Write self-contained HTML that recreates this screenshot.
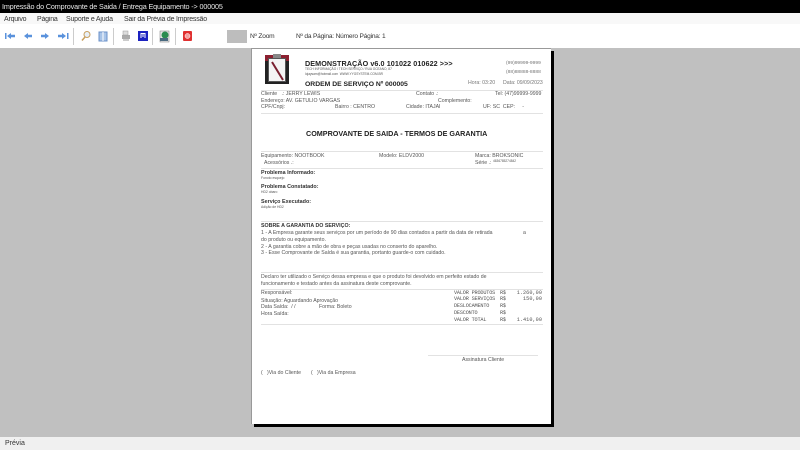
<!DOCTYPE html>
<html lang="pt"><head><meta charset="utf-8"><title>Prévia</title>
<style>
html,body{margin:0;padding:0}
body{width:800px;height:450px;overflow:hidden;position:relative;background:#c0c0c0;font-family:"Liberation Sans",sans-serif}
div{position:absolute;white-space:pre;box-sizing:border-box}
.t{color:#555;font-size:5.2px;line-height:7px;filter:blur(.25px)}
.b{color:#222;font-weight:bold}
.m{font-family:"Liberation Mono",monospace;font-size:5.200px;letter-spacing:-.18px;color:#555;line-height:7px;filter:blur(.25px)}
.l{height:1px;background:#e2e2e2}
.u{font-size:7px;letter-spacing:-.2px;color:#333;line-height:12px;filter:blur(.2px)}
.s{width:1px;height:17px;top:28px;background:#ccc}
svg{position:absolute}
</style></head><body>
<div style="left:0;top:0;width:800px;height:13px;background:#000;color:#e8e8e8;font-size:7.200px;letter-spacing:-.13px;line-height:14px;padding-left:2px">Impressão do Comprovante de Saida / Entrega Equipamento -&gt; 000005</div>
<div style="left:0;top:13px;width:800px;height:11px;background:#f8f8f8"></div>
<div class="u" style="left:4px;top:14px">Arquivo</div>
<div class="u" style="left:37px;top:14px">Página</div>
<div class="u" style="left:66px;top:14px">Suporte e Ajuda</div>
<div class="u" style="left:124px;top:14px">Sair da Prévia de Impressão</div>
<div style="left:0;top:24px;width:800px;height:24px;background:#fff"></div>
<svg style="left:0;top:27px" width="200" height="19" viewBox="0 0 200 19">
<g fill="#5a92dc">
<path d="M7 9l4-3v1.800h4v2.400h-4v1.800z"/><rect x="5" y="6" width="1.500" height="6"/>
<path d="M24 9l4-3v1.800h4v2.400h-4v1.800z"/>
<path d="M49 9l-4-3v1.800h-4v2.400h4v1.800z"/>
<path d="M66 9l-4-3v1.800h-4v2.400h4v1.800z"/><rect x="67" y="6" width="1.500" height="6"/>
</g>
<circle cx="87" cy="7.500" r="3" fill="#e8f0f8" stroke="#c8a060"/><path d="M85 10l-3 3.500" stroke="#c8a060" stroke-width="1.500"/>
<rect x="99" y="5" width="8" height="9" fill="#a8c4e8" stroke="#6a90c8"/><path d="M103 5v9" stroke="#fff"/>
<rect x="122" y="8" width="8" height="4" fill="#aaa"/><rect x="123" y="4" width="5" height="4" fill="#ddd" stroke="#999" stroke-width=".5"/><rect x="123" y="12" width="6" height="2" fill="#ccc"/>
<rect x="138" y="4" width="10" height="10" fill="#1c22c0"/><path d="M140.500 6h5v5h-1v-4h-1v3h-1v-3h-1v4h-1z" fill="#fff"/>
<rect x="160" y="4" width="9" height="11" fill="#e8e8e8" stroke="#777" stroke-width=".5"/><circle cx="165" cy="8" r="3.500" fill="#2a8c50"/><path d="M160 11h8v3h-8z" fill="#4a6a80"/>
<rect x="183" y="4" width="9" height="10" rx="1" fill="#e03030"/><circle cx="187.500" cy="9" r="2.500" fill="#f5a0a0" stroke="#fff" stroke-width=".5"/>
</svg>
<div class="s" style="left:73px"></div><div class="s" style="left:113px"></div><div class="s" style="left:152px"></div><div class="s" style="left:175px"></div>
<div style="left:227px;top:30px;width:20px;height:13px;background:#bdbdbd"></div>
<div class="u" style="left:250px;top:31px;font-size:6.600px">Nº Zoom</div>
<div class="u" style="left:296px;top:31px;font-size:6.600px">Nº da Página: Número Página: 1</div>

<div style="left:254px;top:51px;width:300px;height:376px;background:#000"></div>
<div style="left:251px;top:48px;width:300px;height:376px;background:#fff;border:1px solid #999;border-width:1px 0 0 1px"></div>

<div style="left:265px;top:55px;width:24px;height:29px;background:#222"></div>
<div style="left:265px;top:55px;width:24px;height:6px;background:#8c2030"></div>
<div style="left:268px;top:58px;width:18px;height:24px;background:#f4f4f4;border:1px solid #555"></div>
<div style="left:273px;top:54px;width:8px;height:4px;background:#888"></div>
<svg style="left:265px;top:55px" width="24" height="30"><path d="M7 7l11 18" stroke="#7a2030" stroke-width="2"/></svg>

<div class="b" style="left:305px;top:59px;font-size:7.200px;line-height:9px;letter-spacing:.08px">DEMONSTRAÇÃO v6.0 101022 010622 &gt;&gt;&gt;</div>
<div class="t" style="left:305px;top:67px;font-size:3.200px;line-height:4px">TECH INFORMAÇÃO / TECH SERVIÇO / RUA OCEANO, 87</div>
<div class="t" style="left:305px;top:72px;font-size:3.200px;line-height:4px">lojaysam@hotmail.com  WWW.YYGSYSTEM.COM.BR</div>
<div class="t" style="left:506px;top:60px;font-size:4.900px;color:#777">(99)99999-9999</div>
<div class="t" style="left:506px;top:69px;font-size:4.900px;color:#777">(88)88888-8888</div>
<div class="b" style="left:305px;top:80px;font-size:6.800px;line-height:9px">ORDEM DE SERVIÇO Nº 000005</div>
<div class="t" style="left:468px;top:80px;color:#777">Hora: 03:20</div>
<div class="t" style="left:503px;top:80px;color:#777">Data: 09/09/2023</div>
<div class="l" style="left:261px;top:90px;width:282px"></div>
<div class="t" style="left:261px;top:91px">Cliente   .: JERRY LEWIS</div>
<div class="t" style="left:416px;top:91px">Contato .:</div>
<div class="t" style="left:495px;top:91px">Tel: (47)99999-9999</div>
<div class="t" style="left:261px;top:98px">Endereço: AV. GETULIO VARGAS</div>
<div class="t" style="left:438px;top:98px">Complemento:</div>
<div class="t" style="left:261px;top:104px">CPF/Cnpj:</div>
<div class="t" style="left:335px;top:104px">Bairro : CENTRO</div>
<div class="t" style="left:406px;top:104px">Cidade: ITAJAI</div>
<div class="t" style="left:483px;top:104px">UF: SC  CEP:     -</div>
<div class="l" style="left:261px;top:113px;width:282px"></div>
<div class="b" style="left:306px;top:129px;font-size:7.200px;line-height:9px">COMPROVANTE DE SAIDA - TERMOS DE GARANTIA</div>

<div class="l" style="left:261px;top:151px;width:282px"></div>
<div class="t" style="left:261px;top:153px">Equipamento: NOOTBOOK</div>
<div class="t" style="left:379px;top:153px">Modelo: ELDV2000</div>
<div class="t" style="left:475px;top:153px">Marca: BROKSONIC</div>
<div class="t" style="left:264px;top:160px">Acessórios .:</div>
<div class="t" style="left:475px;top:160px">Série .:</div>
<div class="t" style="left:493px;top:158px;font-size:3.200px">4636785274842</div>
<div class="l" style="left:261px;top:168px;width:282px"></div>
<div class="t b" style="left:261px;top:170px;font-size:5.400px;color:#333">Problema Informado:</div>
<div class="t" style="left:261px;top:175px;font-size:3.400px">Fonoto esquejo</div>
<div class="t b" style="left:261px;top:184px;font-size:5.400px;color:#333">Problema Constatado:</div>
<div class="t" style="left:261px;top:189px;font-size:3.400px">HD2 obaro</div>
<div class="t b" style="left:261px;top:199px;font-size:5.400px;color:#333">Serviço Executado:</div>
<div class="t" style="left:261px;top:204px;font-size:3.400px">Adição de HD2</div>
<div class="l" style="left:261px;top:221px;width:282px"></div>
<div class="t b" style="left:261px;top:223px;font-size:5.300px;color:#333">SOBRE A GARANTIA DO SERVIÇO:</div>
<div class="t" style="left:261px;top:230px">1 - A Empresa garante seus serviços por um período de 90 dias contados a partir da data de retirada</div>
<div class="t" style="left:523px;top:230px">a</div>
<div class="t" style="left:261px;top:237px">do produto ou equipamento.</div>
<div class="t" style="left:261px;top:244px">2 - A garantia cobre a mão de obra e peças usadas no conserto do aparelho.</div>
<div class="t" style="left:261px;top:250px">3 - Esse Comprovante de Saída é sua garantia, portanto guarde-o com cuidado.</div>
<div class="l" style="left:261px;top:272px;width:282px"></div>
<div class="t" style="left:261px;top:274px">Declaro ter utilizado o Serviço dessa empresa e que o produto foi devolvido em perfeito estado de</div>
<div class="t" style="left:261px;top:281px">funcionamento e testado antes da assinatura deste comprovante.</div>
<div class="l" style="left:261px;top:289px;width:282px"></div>
<div class="t" style="left:261px;top:290px">Responsável:</div>
<div class="t" style="left:261px;top:298px">Situação: Aguardando Aprovação</div>
<div class="t" style="left:261px;top:304px">Data Saída:  / /</div>
<div class="t" style="left:319px;top:304px">Forma: Boleto</div>
<div class="t" style="left:261px;top:311px">Hora Saída:</div>
<div class="m" style="left:454px;top:290px">VALOR PRODUTOS</div><div class="m" style="left:500px;top:290px">R$</div><div class="m" style="right:258px;top:290px;letter-spacing:.05px">1.260,00</div>
<div class="m" style="left:454px;top:296px">VALOR SERVIÇOS</div><div class="m" style="left:500px;top:296px">R$</div><div class="m" style="right:258px;top:296px;letter-spacing:.05px">150,00</div>
<div class="m" style="left:454px;top:303px">DESLOCAMENTO</div><div class="m" style="left:500px;top:303px">R$</div>
<div class="m" style="left:454px;top:310px">DESCONTO</div><div class="m" style="left:500px;top:310px">R$</div>
<div class="m" style="left:454px;top:317px">VALOR TOTAL</div><div class="m" style="left:500px;top:317px">R$</div><div class="m" style="right:258px;top:317px;letter-spacing:.05px">1.410,00</div>
<div class="l" style="left:261px;top:324px;width:282px"></div>
<div class="l" style="left:428px;top:355px;width:110px"></div>
<div class="t" style="left:462px;top:357px">Assinatura Cliente</div>
<div class="t" style="left:261px;top:370px">(   )Via do Cliente</div>
<div class="t" style="left:311px;top:370px">(   )Via da Empresa</div>

<div style="left:0;top:437px;width:800px;height:13px;background:#f0f0f0;color:#333;font-size:7px;line-height:13px;padding-left:5px">Prévia</div>
</body></html>
